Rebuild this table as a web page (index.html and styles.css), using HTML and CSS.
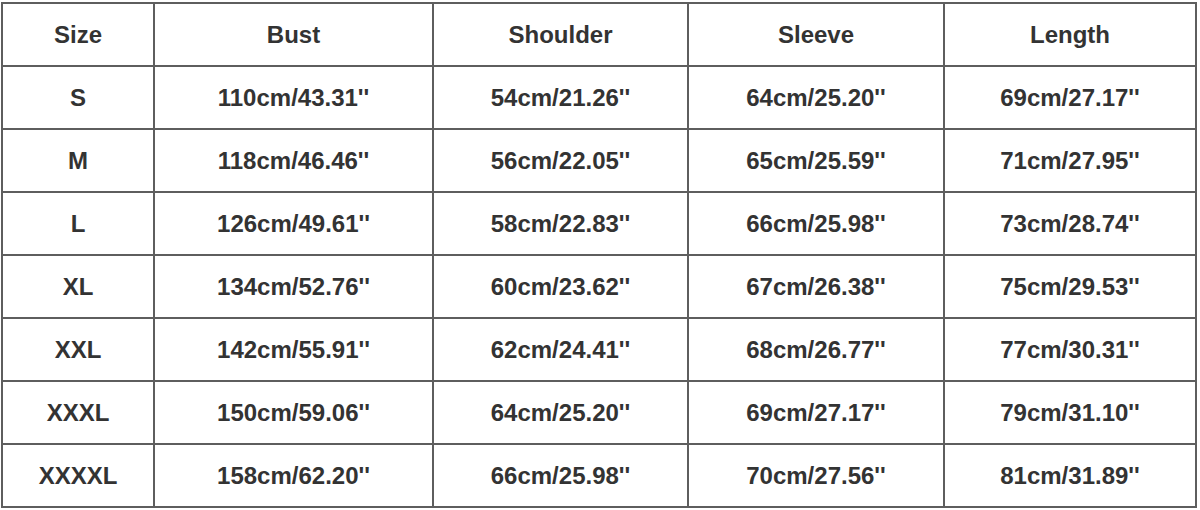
FILE: index.html
```html
<!DOCTYPE html>
<html>
<head>
<meta charset="utf-8">
<link rel="stylesheet" href="styles.css">
</head>
<body>
<div class="chart">
  <div class="cell">Size</div><div class="cell">Bust</div><div class="cell">Shoulder</div><div class="cell">Sleeve</div><div class="cell">Length</div>
  <div class="cell">S</div><div class="cell">110cm/43.31''</div><div class="cell">54cm/21.26''</div><div class="cell">64cm/25.20''</div><div class="cell">69cm/27.17''</div>
  <div class="cell">M</div><div class="cell">118cm/46.46''</div><div class="cell">56cm/22.05''</div><div class="cell">65cm/25.59''</div><div class="cell">71cm/27.95''</div>
  <div class="cell">L</div><div class="cell">126cm/49.61''</div><div class="cell">58cm/22.83''</div><div class="cell">66cm/25.98''</div><div class="cell">73cm/28.74''</div>
  <div class="cell">XL</div><div class="cell">134cm/52.76''</div><div class="cell">60cm/23.62''</div><div class="cell">67cm/26.38''</div><div class="cell">75cm/29.53''</div>
  <div class="cell">XXL</div><div class="cell">142cm/55.91''</div><div class="cell">62cm/24.41''</div><div class="cell">68cm/26.77''</div><div class="cell">77cm/30.31''</div>
  <div class="cell">XXXL</div><div class="cell">150cm/59.06''</div><div class="cell">64cm/25.20''</div><div class="cell">69cm/27.17''</div><div class="cell">79cm/31.10''</div>
  <div class="cell">XXXXL</div><div class="cell">158cm/62.20''</div><div class="cell">66cm/25.98''</div><div class="cell">70cm/27.56''</div><div class="cell">81cm/31.89''</div>
</div>
</body>
</html>
```
FILE: styles.css
```css
html, body {
  margin: 0;
  padding: 0;
  background: #ffffff;
}
body {
  padding: 2px 0 0 1px;
}
.chart {
  display: grid;
  grid-template-columns: 150px 277px 253px 254px 250px;
  grid-auto-rows: 61px;
  gap: 2px;
  padding: 2px;
  width: max-content;
  background: #5e5e5e;
}
.cell {
  background: #ffffff;
  display: flex;
  align-items: center;
  justify-content: center;
  font-family: "Liberation Sans", Arial, sans-serif;
  font-weight: bold;
  font-size: 24px;
  color: #333333;
}
```
